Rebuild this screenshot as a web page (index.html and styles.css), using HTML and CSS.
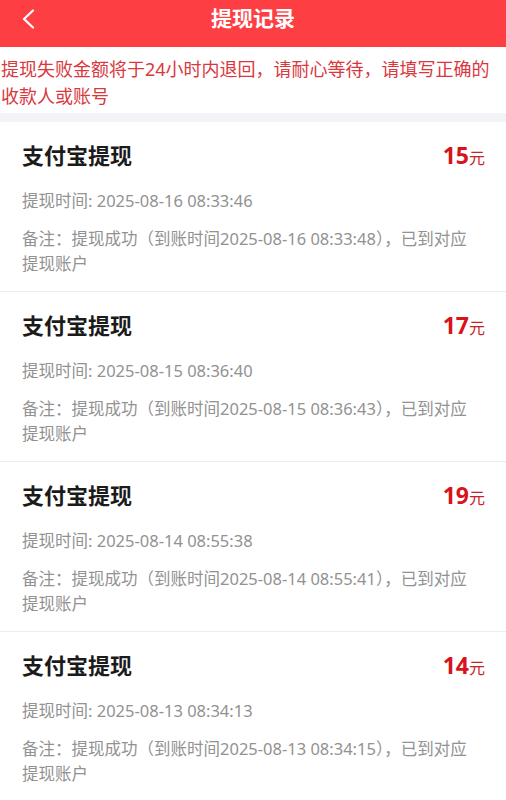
FILE: index.html
```html
<!DOCTYPE html>
<html lang="zh-CN">
<head>
<meta charset="utf-8">
<title>提现记录</title>
<link rel="stylesheet" href="styles.css">
</head>
<body>
<header class="topbar">
  <span class="back">
    <svg width="14" height="20" viewBox="0 0 14 20"><path d="M12 1.5 L3 10 L12 18.5" fill="none" stroke="#fff" stroke-width="2.2" stroke-linecap="round" stroke-linejoin="round"/></svg>
  </span>
  <h1 class="title">提现记录</h1>
</header>
<p class="notice">提现失败金额将于24小时内退回，请耐心等待，请填写正确的收款人或账号</p>
<main class="list">
  <section class="card">
    <div class="row"><span class="name">支付宝提现</span><span class="amount">15<small>元</small></span></div>
    <div class="time">提现时间: 2025-08-16 08:33:46</div>
    <div class="note">备注：提现成功（到账时间2025-08-16 08:33:48），已到对应提现账户</div>
  </section>
  <section class="card">
    <div class="row"><span class="name">支付宝提现</span><span class="amount">17<small>元</small></span></div>
    <div class="time">提现时间: 2025-08-15 08:36:40</div>
    <div class="note">备注：提现成功（到账时间2025-08-15 08:36:43），已到对应提现账户</div>
  </section>
  <section class="card">
    <div class="row"><span class="name">支付宝提现</span><span class="amount">19<small>元</small></span></div>
    <div class="time">提现时间: 2025-08-14 08:55:38</div>
    <div class="note">备注：提现成功（到账时间2025-08-14 08:55:41），已到对应提现账户</div>
  </section>
  <section class="card">
    <div class="row"><span class="name">支付宝提现</span><span class="amount">14<small>元</small></span></div>
    <div class="time">提现时间: 2025-08-13 08:34:13</div>
    <div class="note">备注：提现成功（到账时间2025-08-13 08:34:15），已到对应提现账户</div>
  </section>
</main>
</body>
</html>
```

FILE: styles.css
```css
html, body {
  margin: 0;
  padding: 0;
  background: #ffffff;
  font-family: "Noto Sans", "Noto Sans CJK SC", sans-serif;
}

.topbar {
  position: relative;
  height: 47px;
  background: #fd3f43;
  display: flex;
  justify-content: center;
  align-items: flex-start;
}

.back {
  position: absolute;
  left: 21px;
  top: 9px;
  display: block;
  line-height: 0;
}

.title {
  margin: 0;
  padding-top: 3px;
  font-size: 21px;
  line-height: 30px;
  font-weight: 700;
  color: #ffffff;
}

.notice {
  margin: 0;
  padding: 9px 8px 3px 1px;
  font-size: 18px;
  line-height: 27px;
  color: #d9383e;
  border-bottom: 9px solid #f3f3f7;
}

.list {
  display: flex;
  flex-direction: column;
}

.card {
  padding: 18px 21px 15px 22px;
  border-bottom: 1px solid #ececec;
}

.row {
  display: flex;
  justify-content: space-between;
  align-items: baseline;
  height: 30px;
}

.name {
  font-size: 22px;
  line-height: 30px;
  font-weight: 700;
  color: #1b1b1b;
}

.amount {
  font-size: 23px;
  line-height: 30px;
  font-weight: 700;
  color: #d8131d;
}

.amount small {
  font-size: 16px;
  font-weight: 400;
  color: #c4252b;
}

.time {
  margin-top: 19px;
  font-size: 16.5px;
  line-height: 24px;
  color: #929292;
}

.note {
  margin-top: 13px;
  padding-right: 14px;
  font-size: 16.5px;
  line-height: 25px;
  color: #929292;
}
```
